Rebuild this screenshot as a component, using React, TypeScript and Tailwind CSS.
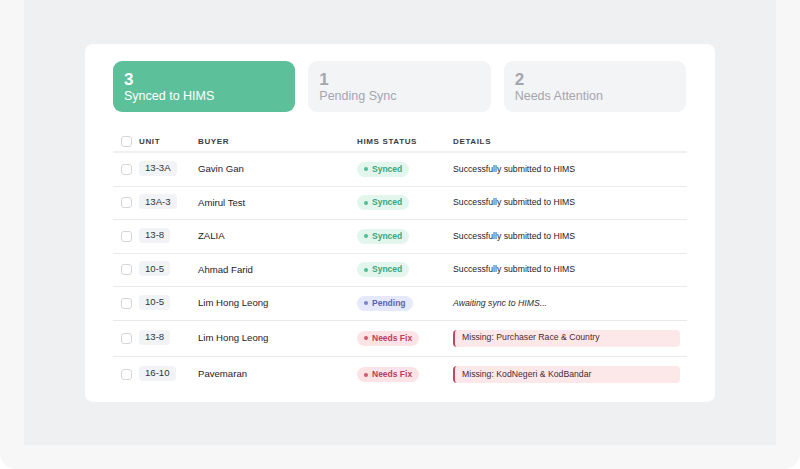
import { Fragment } from 'react'

type Status = 'synced' | 'pending' | 'fix'

interface Row {
  unit: string
  buyer: string
  status: Status
  details: string
}

const rows: Row[] = [
  { unit: '13-3A', buyer: 'Gavin Gan', status: 'synced', details: 'Successfully submitted to HIMS' },
  { unit: '13A-3', buyer: 'Amirul Test', status: 'synced', details: 'Successfully submitted to HIMS' },
  { unit: '13-8', buyer: 'ZALIA', status: 'synced', details: 'Successfully submitted to HIMS' },
  { unit: '10-5', buyer: 'Ahmad Farid', status: 'synced', details: 'Successfully submitted to HIMS' },
  { unit: '10-5', buyer: 'Lim Hong Leong', status: 'pending', details: 'Awaiting sync to HIMS...' },
  { unit: '13-8', buyer: 'Lim Hong Leong', status: 'fix', details: 'Missing: Purchaser Race & Country' },
  { unit: '16-10', buyer: 'Pavemaran', status: 'fix', details: 'Missing: KodNegeri & KodBandar' },
]

function StatusBadge({ status }: { status: Status }) {
  if (status === 'synced') {
    return (
      <span className="inline-flex items-center gap-[4px] h-[15px] px-[7px] rounded-full bg-[#e2f6ee] text-[#3aa57b] text-[8.5px] font-bold">
        <span className="w-[4px] h-[4px] rounded-full bg-[#4cbf93]" /> Synced
      </span>
    )
  }
  if (status === 'pending') {
    return (
      <span className="inline-flex items-center gap-[4px] h-[15px] px-[7px] rounded-full bg-[#e6e9fb] text-[#5a64b0] text-[8.5px] font-bold">
        <span className="w-[4px] h-[4px] rounded-full bg-[#7a83c8]" /> Pending
      </span>
    )
  }
  return (
    <span className="inline-flex items-center gap-[4px] h-[15px] px-[7px] rounded-full bg-[#fce4e6] text-[#b8405a] text-[8.5px] font-bold">
      <span className="w-[4px] h-[4px] rounded-full bg-[#d4566f]" /> Needs Fix
    </span>
  )
}

function Checkbox() {
  return <span className="block w-[11px] h-[11px] rounded-[3px] border border-[#d4d6db] bg-white" />
}

export default function App() {
  return (
    <div className="w-[800px] h-[469px] bg-[#f7f7f7] rounded-b-[16px] overflow-hidden" style={{ fontFamily: '"Liberation Sans", Arial, sans-serif' }}>
      <div className="mx-[24px] h-[445px] bg-[#eff0f2] pt-[44px]">
        <div className="mx-[61px] h-[358px] bg-white rounded-[8px] px-[28px] pt-[17px]">
          {/* stat cards */}
          <div className="grid grid-cols-3 gap-[13px] pr-[1px]">
            <div className="h-[51px] rounded-[9px] bg-[#5cc19b] px-[11px] pt-[10px] text-white">
              <p className="text-[17px] font-bold leading-[18px]">3</p>
              <p className="text-[12.5px] leading-[15px]">Synced to HIMS</p>
            </div>
            <div className="h-[51px] rounded-[9px] bg-[#f3f4f6] px-[11px] pt-[10px] text-[#a3a6ad]">
              <p className="text-[17px] font-bold leading-[18px]">1</p>
              <p className="text-[12.5px] leading-[15px]">Pending Sync</p>
            </div>
            <div className="h-[51px] rounded-[9px] bg-[#f3f4f6] px-[11px] pt-[10px] text-[#a3a6ad]">
              <p className="text-[17px] font-bold leading-[18px]">2</p>
              <p className="text-[12.5px] leading-[15px]">Needs Attention</p>
            </div>
          </div>

          {/* table */}
          <div className="mt-[20px] grid grid-cols-[26px_59px_159px_96px_1fr]">
            <div className="h-[21px] flex items-center pl-[8px] border-b-2 border-[#eeeff1]"><Checkbox /></div>
            <div className="h-[21px] flex items-center text-[8px] font-bold tracking-[0.08em] text-[#3b3d42] border-b-2 border-[#eeeff1]">UNIT</div>
            <div className="h-[21px] flex items-center text-[8px] font-bold tracking-[0.08em] text-[#3b3d42] border-b-2 border-[#eeeff1]">BUYER</div>
            <div className="h-[21px] flex items-center text-[8px] font-bold tracking-[0.08em] text-[#3b3d42] border-b-2 border-[#eeeff1]">HIMS STATUS</div>
            <div className="h-[21px] flex items-center text-[8px] font-bold tracking-[0.08em] text-[#3b3d42] border-b-2 border-[#eeeff1]">DETAILS</div>

            {rows.map((r, i) => {
              const last = i === rows.length - 1
              const cell = `${r.status === 'fix' ? 'h-[36px]' : 'h-[33.5px]'} flex items-center ${last ? '' : 'border-b border-[#e9eaed]'}`
              return (
                <Fragment key={i}>
                  <div className={`${cell} pl-[8px]`}><Checkbox /></div>
                  <div className={cell}>
                    <span className="inline-flex items-center h-[15px] px-[6px] rounded-[4px] bg-[#f2f3f7] text-[9.6px] text-[#33353a] -mt-[2px]">{r.unit}</span>
                  </div>
                  <div className={`${cell} text-[9.6px] text-[#1f2125]`}>{r.buyer}</div>
                  <div className={cell}><StatusBadge status={r.status} /></div>
                  <div className={`${cell} pr-[7px]`}>
                    {r.status === 'fix' ? (
                      <span className="flex items-center w-full h-[17px] rounded-[4px] border-l-2 border-[#c0475f] bg-[#fde8e9] pl-[7px] text-[8.7px] text-[#4a2a30]">{r.details}</span>
                    ) : r.status === 'pending' ? (
                      <span className="text-[8.7px] italic text-[#2c2e33]">{r.details}</span>
                    ) : (
                      <span className="text-[8.7px] text-[#1f2125]">{r.details}</span>
                    )}
                  </div>
                </Fragment>
              )
            })}
          </div>
        </div>
      </div>
    </div>
  )
}
